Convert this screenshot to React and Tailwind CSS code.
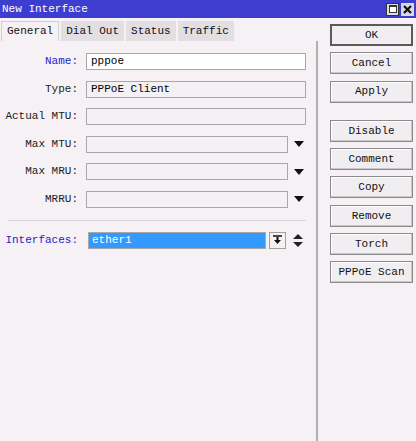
import React from 'react'

const mono = { fontFamily: '"Liberation Mono", "DejaVu Sans Mono", monospace' }

function Field({ label, value, blue, white, arrow }) {
  return (
    <div className="flex h-[17px] items-center">
      <div className={`w-[80px] pr-[2px] text-right ${blue ? 'text-[#2323c8]' : 'text-[#222]'}`}>{label}</div>
      <div
        className={`ml-[6px] h-[17px] border border-[#a8a8a8] pl-[4px] leading-[15px] ${white ? 'bg-white' : 'bg-[#f3f1f3]'} ${arrow ? 'w-[202px]' : 'w-[220px]'}`}
      >
        {value}
      </div>
      {arrow && (
        <svg width="10" height="6" viewBox="0 0 10 6" className="ml-[6px]">
          <path d="M0 0 H10 L5 6 Z" fill="#111" />
        </svg>
      )}
    </div>
  )
}

function Btn({ children, main, gapTop }) {
  return (
    <div
      className={`flex h-[22px] w-[83px] items-center justify-center bg-[#f0eef0] text-[#111] ${
        main ? 'border-2 border-[#5a5a5a]' : 'border border-[#8a8a8a] shadow-[inset_-1px_-1px_0_#c8c8c8,inset_1px_1px_0_#fff]'
      } ${gapTop ? 'mt-[11px]' : ''}`}
    >
      {children}
    </div>
  )
}

export default function App() {
  const tabs = ['Dial Out', 'Status', 'Traffic']
  return (
    <div className="flex h-[441px] w-[416px] flex-col bg-[#f5f1f5] text-[11px]" style={mono}>
      {/* title bar */}
      <div className="flex h-[18px] items-center bg-[#3d3dd0] pl-[2px] pr-[2px] text-white">
        <span className="leading-none">New Interface</span>
        <div className="ml-auto flex gap-[2px]">
          <div className="flex h-[13px] w-[13px] items-center justify-center border border-[#333] bg-[#dcdce8]">
            <div className="h-[8px] w-[8px] border border-[#333] border-t-2 bg-white" />
          </div>
          <div className="flex h-[13px] w-[13px] items-center justify-center bg-[#d8d8e0]">
            <svg width="9" height="9" viewBox="0 0 9 9">
              <path d="M1 1 L8 8 M8 1 L1 8" stroke="#111" strokeWidth="2.2" />
            </svg>
          </div>
        </div>
      </div>

      <div className="flex flex-1">
        {/* left panel */}
        <div className="flex w-[318px] flex-col">
          <div className="mt-[3px] flex h-[20px] items-stretch pl-[1px]">
            <div className="flex items-center border-x border-t border-[#d0d0d0] bg-[#f5f1f5] px-[5px] text-[#111]">General</div>
            {tabs.map((t) => (
              <div key={t} className="ml-[2px] flex items-center bg-[#e2dee2] px-[5px] text-[#111]">
                {t}
              </div>
            ))}
          </div>
          <div className="flex flex-1 flex-col border-r-2 border-[#b0b0b0] pt-[12px]">
            <div className="flex flex-col gap-[10.5px]">
              <Field label="Name:" value="pppoe" blue white />
              <Field label="Type:" value="PPPoE Client" />
              <Field label="Actual MTU:" value="" />
              <Field label="Max MTU:" value="" arrow />
              <Field label="Max MRU:" value="" arrow />
              <Field label="MRRU:" value="" arrow />
            </div>
            <div className="ml-[8px] mt-[12px] h-px w-[298px] bg-[#d8d4d8]" />
            <div className="mt-[11px] flex h-[17px] items-center">
              <div className="w-[80px] pr-[2px] text-right text-[#2323c8]">Interfaces:</div>
              <div className="ml-[8px] h-[17px] w-[178px] border border-[#a8a8a8] bg-[#3399ff] pl-[3px] leading-[15px] text-white">
                ether1
              </div>
              <div className="ml-[3px] flex h-[17px] w-[17px] items-center justify-center border border-[#a0a0a0] bg-[#f3f1f3]">
                <svg width="9" height="10" viewBox="0 0 9 10">
                  <path d="M0 1 H9" stroke="#111" strokeWidth="1.5" />
                  <path d="M4.5 2 V6" stroke="#111" strokeWidth="2" />
                  <path d="M1 5 H8 L4.5 9 Z" fill="#111" />
                </svg>
              </div>
              <svg width="10" height="13" viewBox="0 0 10 13" className="ml-[7px]">
                <path d="M0 5 H10 L5 0 Z" fill="#222" />
                <path d="M0 8 H10 L5 13 Z" fill="#222" />
              </svg>
            </div>
          </div>
        </div>

        {/* right buttons */}
        <div className="flex flex-col gap-[6.3px] pl-[12px] pt-[6px]">
          <Btn main>OK</Btn>
          <Btn>Cancel</Btn>
          <Btn>Apply</Btn>
          <Btn gapTop>Disable</Btn>
          <Btn>Comment</Btn>
          <Btn>Copy</Btn>
          <Btn>Remove</Btn>
          <Btn>Torch</Btn>
          <Btn>PPPoE Scan</Btn>
        </div>
      </div>
    </div>
  )
}
